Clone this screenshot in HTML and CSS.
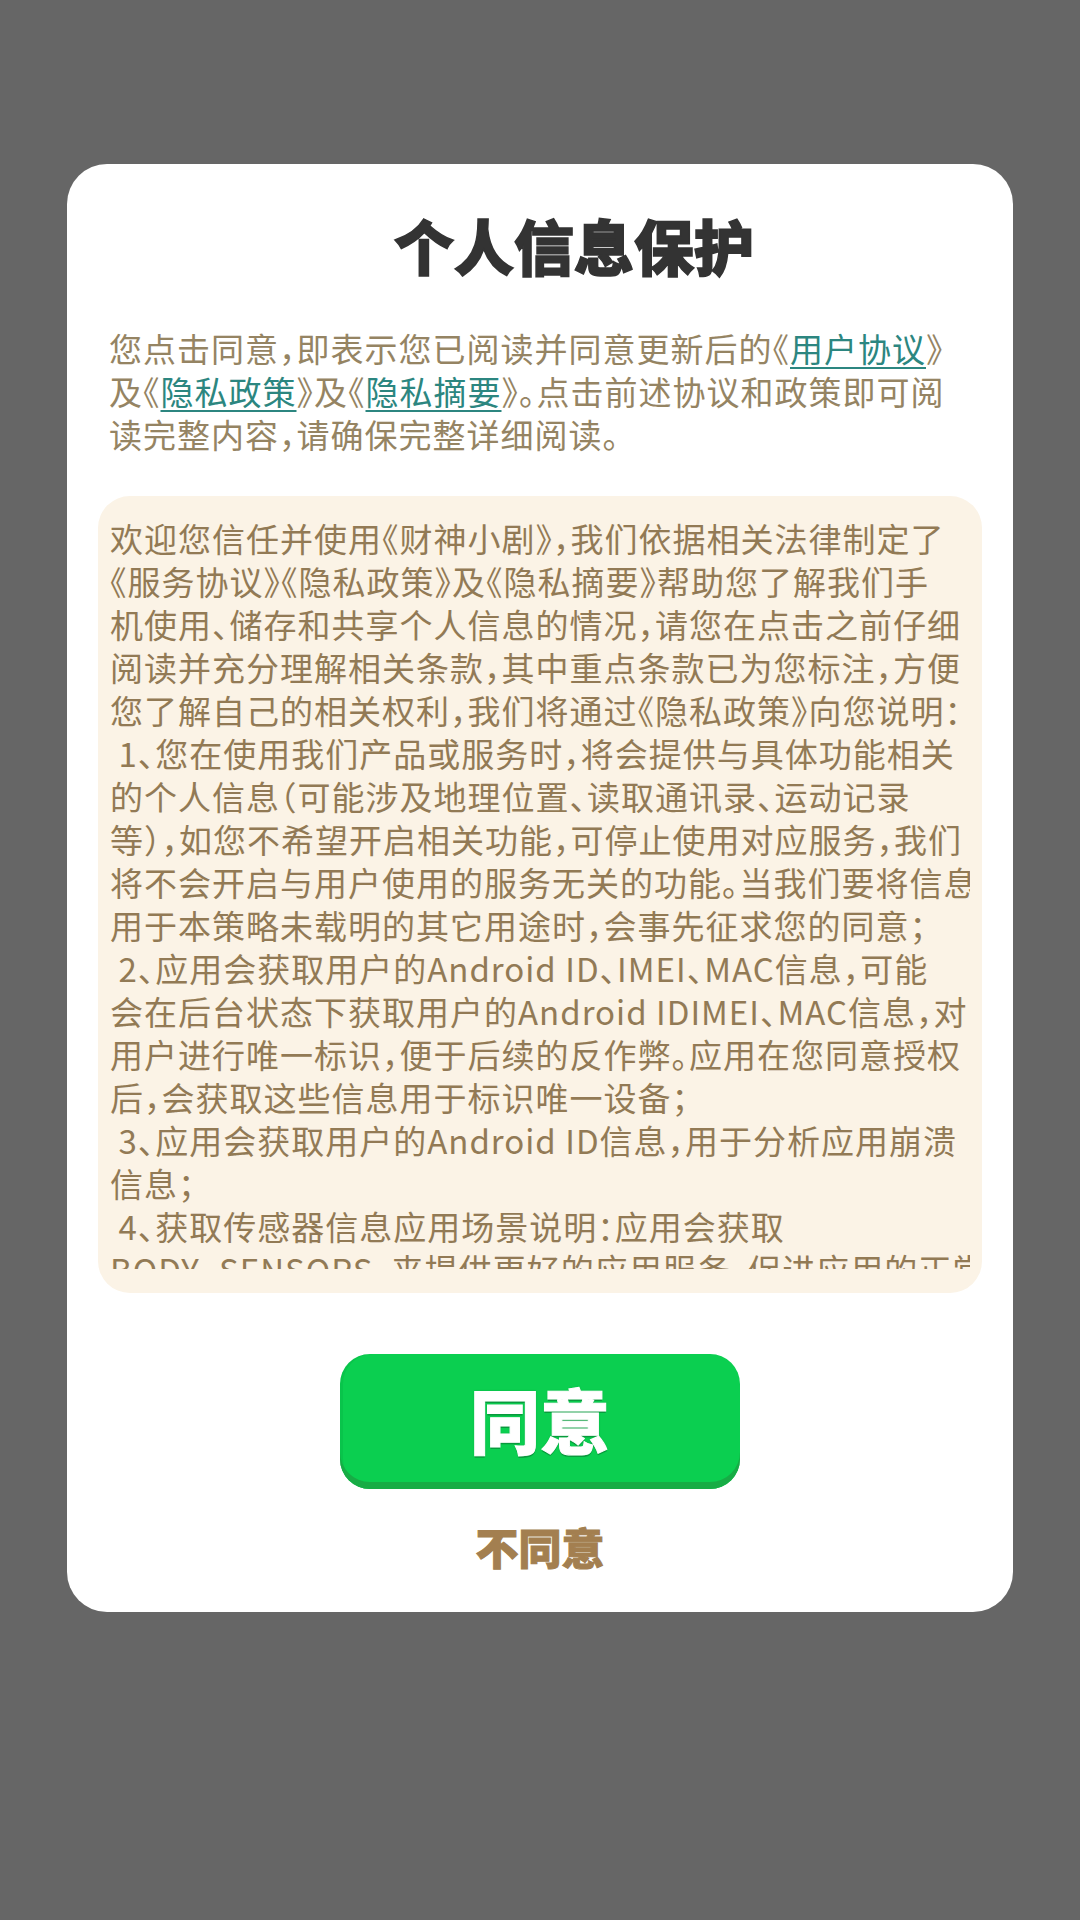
FILE: index.html
```html
<!DOCTYPE html>
<html lang="zh-CN">
<head>
<meta charset="utf-8">
<title>个人信息保护</title>
<link rel="stylesheet" href="styles.css">
</head>
<body>
<div class="card">
  <h1 class="title">个人信息保护</h1>
  <div class="intro">您点击同意，即表示您已阅读并同意更新后的《<a class="link">用户协议</a>》<br>及《<a class="link">隐私政策</a>》及《<a class="link">隐私摘要</a>》。点击前述协议和政策即可阅<br>读完整内容，请确保完整详细阅读。</div>
  <div class="box">
    <div class="scroll">欢迎您信任并使用《财神小剧》，我们依据相关法律制定了<br>《服务协议》《隐私政策》及《隐私摘要》帮助您了解我们手<br>机使用、储存和共享个人信息的情况，请您在点击之前仔细<br>阅读并充分理解相关条款，其中重点条款已为您标注，方便<br>您了解自己的相关权利，我们将通过《隐私政策》向您说明：<br> 1、您在使用我们产品或服务时，将会提供与具体功能相关<br>的个人信息（可能涉及地理位置、读取通讯录、运动记录<br>等），如您不希望开启相关功能，可停止使用对应服务，我们<br>将不会开启与用户使用的服务无关的功能。当我们要将信息<br>用于本策略未载明的其它用途时，会事先征求您的同意；<br> 2、应用会获取用户的Android ID、IMEI、MAC信息，可能<br>会在后台状态下获取用户的Android IDIMEI、MAC信息，对<br>用户进行唯一标识，便于后续的反作弊。应用在您同意授权<br>后，会获取这些信息用于标识唯一设备；<br> 3、应用会获取用户的Android ID信息，用于分析应用崩溃<br>信息；<br> 4、获取传感器信息应用场景说明：应用会获取<br>BODY_SENSORS，来提供更好的应用服务，促进应用的正常<br>运行。</div>
  </div>
  <button class="agree">同意</button>
  <div class="disagree">不同意</div>
</div>
</body>
</html>
```

FILE: styles.css
```css
html, body {
  margin: 0;
  padding: 0;
  background: #666666;
}
body {
  width: 1080px;
  height: 1920px;
  font-family: "Noto Sans CJK SC", "Noto Sans", sans-serif;
  overflow: hidden;
}
.card {
  box-sizing: border-box;
  margin: 164px 0 0 67px;
  width: 946px;
  height: 1448px;
  background: #ffffff;
  border-radius: 40px;
  display: flex;
  flex-direction: column;
  align-items: center;
}
.title {
  margin: 0;
  padding: 46px 0 0 68px;
  font-size: 60px;
  line-height: 70px;
  font-weight: 900;
  color: #333333;
  -webkit-text-stroke: 1.5px #333333;
}
.intro {
  align-self: stretch;
  margin-top: 47px;
  padding-left: 42px;
  font-size: 33px;
  line-height: 43px;
  letter-spacing: 1px;
  font-feature-settings: "halt" 1;
  color: #958463;
  white-space: nowrap;
}
.link {
  color: #2c8680;
  text-decoration: underline;
  text-decoration-thickness: 2px;
  text-underline-offset: 5px;
}
.box {
  box-sizing: border-box;
  align-self: stretch;
  margin: 40px 31px 0;
  height: 797px;
  padding: 21px 12px 0;
  background: #fbf3e6;
  border-radius: 32px;
}
.scroll {
  height: 752px;
  overflow: hidden;
  font-size: 33px;
  line-height: 43px;
  letter-spacing: 1px;
  font-feature-settings: "halt" 1;
  color: #927a55;
  white-space: pre;
}
.agree {
  margin-top: 61px;
  width: 400px;
  height: 135px;
  border: none;
  border-radius: 30px;
  background: #0bcf50;
  box-shadow: inset 0 -7px 0 #17ac45, inset 3px 0 0 rgba(0, 120, 40, 0.12);
  font-family: "Noto Sans CJK SC", sans-serif;
  font-size: 70px;
  font-weight: 900;
  line-height: 80px;
  color: #ffffff;
  -webkit-text-stroke: 1px #ffffff;
  text-shadow: 0 0 2px #0a9a3e, 0 2px 0 #0a9a3e;
  padding: 0 0 6px;
}
.disagree {
  margin-top: 32px;
  font-size: 43px;
  line-height: 50px;
  font-weight: 900;
  color: #a37f50;
  -webkit-text-stroke: 1px #a37f50;
}
```
